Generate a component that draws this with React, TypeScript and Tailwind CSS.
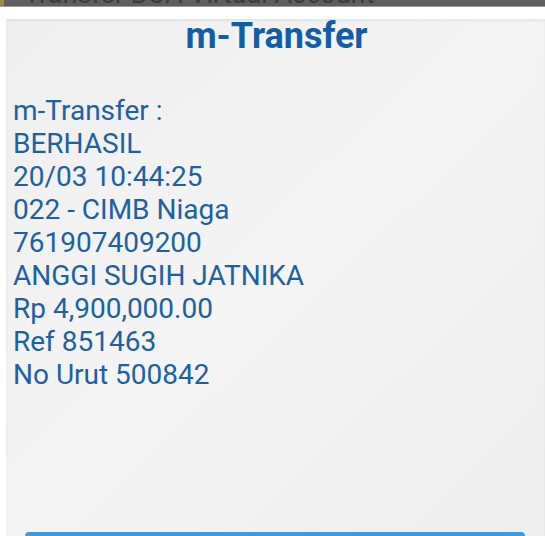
export default function App() {
  const lines = [
    "m-Transfer :",
    "BERHASIL",
    "20/03 10:44:25",
    "022 - CIMB Niaga",
    "761907409200",
    "ANGGI SUGIH JATNIKA",
    "Rp 4,900,000.00",
    "Ref 851463",
    "No Urut 500842",
  ]

  return (
    <div className="w-[545px] h-[536px] overflow-hidden bg-white flex flex-col font-['Roboto',sans-serif]">
      <div className="h-[6px] bg-[#5e5e5e] relative overflow-hidden shrink-0">
        <span className="absolute left-[24px] top-[-17px] text-[27px] leading-[22px] text-[#3b3b3b] whitespace-nowrap">
          Transfer BCA Virtual Account
        </span>
        <span className="absolute left-0 top-0 w-[4px] h-[6px] bg-[#a08a3c]"></span>
      </div>
      <div className="h-[1px] bg-[#9a9a9a] shrink-0"></div>
      <div className="h-[12px] shrink-0"></div>
      <div className="flex-1 ml-[6px] bg-gradient-to-br from-[#efefef] via-[#f4f4f4] to-[#eeeeee] shadow-[inset_0_2px_3px_rgba(0,0,0,0.06)] flex flex-col">
        <h1 className="text-center text-[36px] leading-[34px] font-bold text-[#135da6] pl-[2px]">m-Transfer</h1>
        <div className="mt-[41px] pl-[7px] text-[#1d60a4] text-[28px] leading-[33px]">
          {lines.map(line => (
            <div key={line}>{line}</div>
          ))}
        </div>
        <div className="flex-1"></div>
        <div className="ml-[19px] mr-[20px] h-[4px] rounded-t-[14px] bg-[#3d9ae0]"></div>
      </div>
    </div>
  )
}
